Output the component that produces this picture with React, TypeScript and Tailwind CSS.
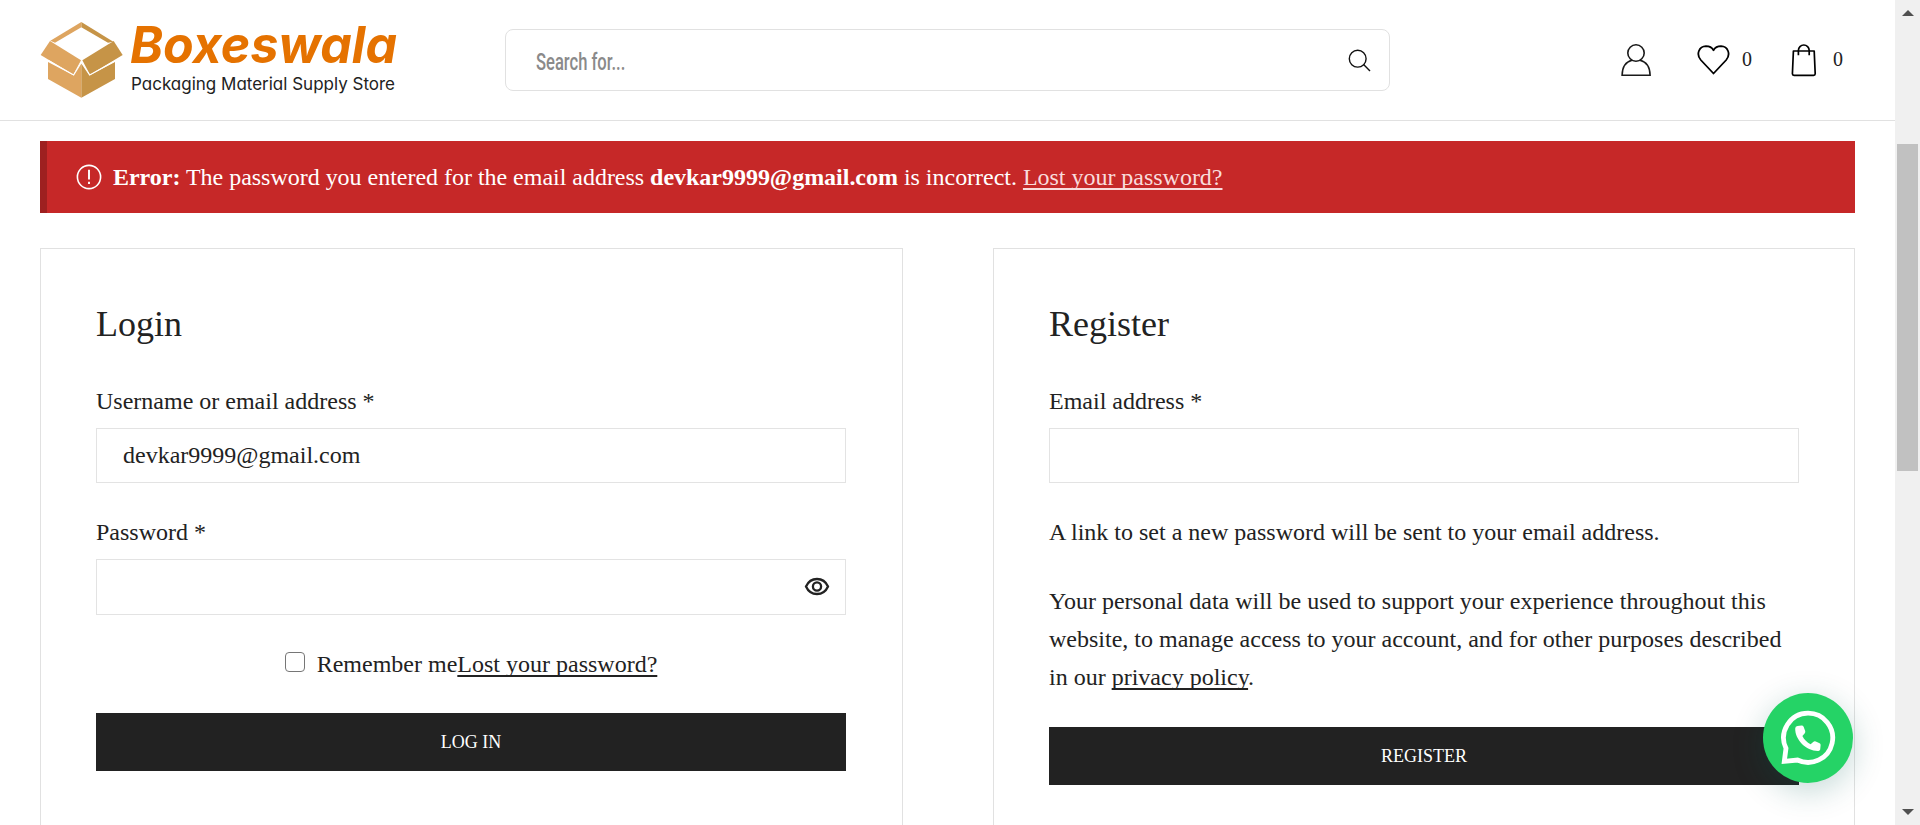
import React from "react";

function BoxLogo() {
  return (
    <svg width="84" height="80" viewBox="60 60 252 240" className="shrink-0">
      <path d="M184 66 L280 125 L264 128 L184 82 Z" fill="#c69447" />
      <path d="M184 66 L91 122 L105 128 L184 82 Z" fill="#dea560" />
      <path d="M84 186 L160 226 L184 186 L184 293 L84 237 Z" fill="#dea560" />
      <path d="M285 186 L209 226 L184 186 L184 293 L285 237 Z" fill="#c69447" />
      <path d="M90 123 L183 181 L160 224 L62 165 Z" fill="#dea560" />
      <path d="M281 123 L187 181 L210 224 L308 165 Z" fill="#c69447" />
      <path d="M84 181 L161 225 L184 187 L209 225 L286 182" fill="none" stroke="#fff" strokeWidth="3.5" />
    </svg>
  );
}

function Logo() {
  return (
    <div className="flex h-[80px] w-[365px] items-start">
      <BoxLogo />
      <svg width="280" height="84" viewBox="0 0 280 84" className="ml-[4px] shrink-0 overflow-visible">
        <text x="2" y="43" textLength="267" lengthAdjust="spacingAndGlyphs" fill="#e57200"
          className="font-['Inter',sans-serif] text-[51px] font-bold italic [font-feature-settings:'cv11']">Boxeswala</text>
        <text x="3" y="70" textLength="264" lengthAdjust="spacingAndGlyphs" fill="#222"
          className="font-['Inter',sans-serif] text-[17px] [font-feature-settings:'cv11']">Packaging Material Supply Store</text>
      </svg>
    </div>
  );
}

function SearchBox() {
  return (
    <div className="flex h-[62px] w-[885px] items-center justify-between rounded-[8px] border border-[#e1e1e1] pl-[30px] pr-[18px]">
      <span className="origin-left scale-x-[0.69] pt-[4px] font-['Roboto',sans-serif] text-[24px] font-medium text-[#8a8a8a]">Search for...</span>
      <svg width="23" height="23" viewBox="0 0 23 23" fill="none" stroke="#111" strokeWidth="1.4">
        <circle cx="9.7" cy="9.7" r="8.4" />
        <path d="M15.6 15.6 L22 22" />
      </svg>
    </div>
  );
}

function HeaderIcons() {
  return (
    <div className="flex items-center text-[20px] leading-none text-[#222]">
      <svg width="32" height="34" viewBox="0 0 32 34" fill="none" stroke="#1a1a1a" strokeWidth="1.6">
        <circle cx="16" cy="10" r="8.2" />
        <path d="M12 17.2 C6 18.6 2.3 24 2.1 32.2 H30.1 C29.9 24 26 18.6 20 17.2" />
      </svg>
      <svg width="34" height="32" viewBox="0 0 34 32" fill="none" stroke="#000" strokeWidth="1.8" strokeLinejoin="round" className="ml-[44px]">
        <path d="M17.5 29.5 L4.8 16 C-0.2 10.2 3 2.4 10 2.2 C13.4 2.2 16 3.6 17.5 6.2 C19 3.6 21.6 2.2 25 2.2 C32 2.4 35 10.2 30.2 16 Z" />
      </svg>
      <span className="-mt-[2px] ml-[12px]">0</span>
      <svg width="26" height="34" viewBox="0 0 26 34" fill="none" stroke="#000" strokeWidth="1.7" strokeLinejoin="round" className="ml-[39px]">
        <path d="M2.4 8 H23.2 L24.2 30.8 Q24.2 32.4 22.6 32.4 H3 Q1.4 32.4 1.4 30.8 Z" />
        <path d="M7.4 12.2 V7.4 A5.4 5.4 0 0 1 18.2 7.4 V12.2" />
      </svg>
      <span className="-mt-[2px] ml-[16px]">0</span>
    </div>
  );
}

function Header() {
  return (
    <header className="flex h-[121px] shrink-0 items-center border-b border-[#e1e1e1] pl-[40px]">
      <Logo />
      <div className="ml-[100px]"><SearchBox /></div>
      <div className="ml-[230px]"><HeaderIcons /></div>
    </header>
  );
}

function ErrorNotice() {
  return (
    <div className="mt-[20px] flex h-[72px] shrink-0 items-center border-l-[7px] border-[#9e2020] bg-[#c62828] pl-[29px] text-white">
      <svg width="26" height="26" viewBox="0 0 26 26" fill="none" stroke="#fff" strokeWidth="1.6" className="-mt-px shrink-0">
        <circle cx="13" cy="13" r="11.6" />
        <path d="M13 5.8 V15.4 M13 17.8 V20" strokeWidth="1.9" />
      </svg>
      <p className="ml-[11px] leading-[38px] tracking-[-0.022px]">
        <strong>Error:</strong> The password you entered for the email address <strong>devkar9999@gmail.com</strong> is incorrect.{" "}
        <a className="text-[#f9dcdc] underline decoration-2 underline-offset-[3px] [text-decoration-skip-ink:none]">Lost your password?</a>
      </p>
    </div>
  );
}

const inputClass = "flex h-[55px] w-full items-center border border-[#e3e3e3] mt-[8px]";
const buttonClass = "flex h-[58px] w-full items-center justify-center bg-[#222] text-[18px] text-white";
const linkClass = "underline decoration-2 underline-offset-[3px] [text-decoration-skip-ink:none]";

function LoginCard() {
  return (
    <section className="h-[620px] w-[863px] border border-[#e1e1e1] pl-[55px] pr-[56px] pt-[45px]">
      <h2 className="text-[36px] leading-[60px]">Login</h2>
      <div className="mt-[28px]">
        <label className="block">Username or email address *</label>
        <div className={inputClass + " pb-[2px] pl-[26px]"}>devkar9999@gmail.com</div>
      </div>
      <div className="mt-[30px]">
        <label className="block">Password *</label>
        <div className="mt-[8px] flex h-[56px] w-full items-center justify-end border border-[#e3e3e3] pr-[15px]">
          <svg width="26" height="20" viewBox="0 0 26 20" fill="none" stroke="#222" strokeWidth="2.3">
            <path d="M2 9.5 C4.2 4.6 8.4 2 13 2 S21.8 4.6 24 9.5 C21.8 14.4 17.6 17 13 17 S4.2 14.4 2 9.5 Z" />
            <circle cx="13" cy="9.5" r="4.1" />
          </svg>
        </div>
      </div>
      <div className="mt-[30px] flex items-center justify-center">
        <span className="-mt-[5px] mr-[12px] h-[20px] w-[20px] rounded-[4px] border border-[#767676] bg-white" />
        <span>Remember me</span>
        <a className={linkClass}>Lost your password?</a>
      </div>
      <div className={buttonClass + " mt-[30px]"}>LOG IN</div>
    </section>
  );
}

function RegisterCard() {
  return (
    <section className="h-[620px] w-[862px] border border-[#e1e1e1] px-[55px] pt-[45px]">
      <h2 className="text-[36px] leading-[60px]">Register</h2>
      <div className="mt-[28px]">
        <label className="block">Email address *</label>
        <div className={inputClass} />
      </div>
      <p className="mt-[30px]">A link to set a new password will be sent to your email address.</p>
      <p className="mt-[31px]">
        Your personal data will be used to support your experience throughout this
        <br />
        website, to manage access to your account, and for other purposes described
        <br />
        in our <a className={linkClass}>privacy policy</a>.
      </p>
      <div className={buttonClass + " mt-[31px]"}>REGISTER</div>
    </section>
  );
}

function WhatsAppButton() {
  return (
    <div className="absolute left-[1763px] top-[693px] flex h-[90px] w-[90px] items-center justify-center rounded-full bg-[#25d366] shadow-[0_8px_32px_rgba(7,94,84,0.24)]">
      <svg width="56" height="56" viewBox="0 0 56 56">
        <path d="M28 3.2 A24.6 24.6 0 1 1 17.5 50 L4.3 51.3 L6 38.4 A24.6 24.6 0 0 1 28 3.2 Z" fill="none" stroke="#fff" strokeWidth="4.8" />
        <path d="M17.5 16 L21.5 15.5 Q23 15.4 23.6 16.8 L25.2 21 Q25.6 22.4 24.6 23.6 L22.4 26 C24.3 29.8 27 32.4 30.6 34.2 L33.2 31.9 Q34.4 31 35.8 31.5 L39.6 33.2 Q40.8 33.8 40.6 35.2 L40.2 39.6 Q39.8 40.8 38.4 40.9 C26.4 41.2 15 29.6 15.2 18.4 Q15.2 16.4 17.5 16 Z" fill="#fff" />
      </svg>
    </div>
  );
}

function Scrollbar() {
  return (
    <div className="flex h-full w-[25px] shrink-0 flex-col items-center bg-[#f0f0f0]">
      <svg width="12" height="6" viewBox="0 0 12 6" className="mt-[10px]"><path d="M6 0 L12 6 H0 Z" fill="#505050" /></svg>
      <div className="mt-[128px] h-[327px] w-[21px] bg-[#c1c1c1]" />
      <svg width="12" height="6" viewBox="0 0 12 6" className="mb-[10px] mt-auto"><path d="M0 0 H12 L6 6 Z" fill="#505050" /></svg>
    </div>
  );
}

export default function App() {
  return (
    <div className="relative flex h-[825px] w-[1920px] overflow-hidden bg-white font-['Liberation_Serif',serif] text-[24px] leading-[38px] text-[#222]">
      <div className="flex h-full w-[1895px] flex-col">
        <Header />
        <main className="flex min-h-0 grow flex-col pl-[40px] pr-[40px]">
          <ErrorNotice />
          <div className="mt-[35px] flex min-h-0 grow items-start justify-between">
            <LoginCard />
            <RegisterCard />
          </div>
        </main>
      </div>
      <Scrollbar />
      <WhatsAppButton />
    </div>
  );
}
